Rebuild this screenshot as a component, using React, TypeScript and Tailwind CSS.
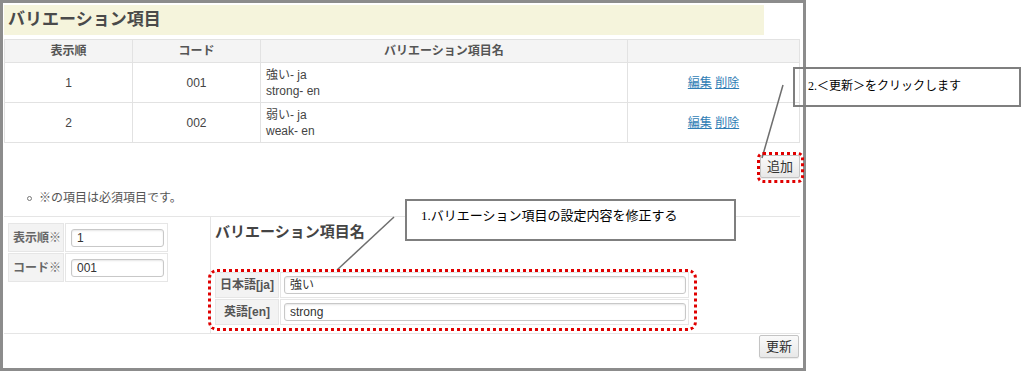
import React from "react";

const font = "font-['Liberation_Sans','Noto_Sans_CJK_JP',sans-serif]";
const serif = "font-['Liberation_Serif','Noto_Sans_CJK_JP',serif]";

function Btn({ children }: { children: React.ReactNode }) {
  return (
    <button className="h-[23px] px-[6px] text-[13px] leading-none text-[#333] border border-[#c4c4c4] rounded-[2px] bg-gradient-to-b from-[#fafafa] to-[#e8e8e8] shadow-[0_1px_1px_rgba(0,0,0,0.08)]">
      {children}
    </button>
  );
}

function Input({ value, w }: { value: string; w: string }) {
  return (
    <div
      className={`${w} h-[18px] border border-[#c8c8c8] rounded-[3px] bg-white shadow-[inset_0_1px_2px_rgba(0,0,0,0.1)] px-[5px] text-[12px] leading-[16px] text-[#333]`}
    >
      {value}
    </div>
  );
}

export default function App() {
  const rows = [
    { n: "1", code: "001", ja: "強い- ja", en: "strong- en" },
    { n: "2", code: "002", ja: "弱い- ja", en: "weak- en" },
  ];
  return (
    <div className={`relative w-[1024px] h-[372px] bg-white ${font}`}>
      {/* main frame */}
      <div className="w-[806px] h-[371px] border-[3px] border-[#8c8c8c] pl-[1px] pr-[3px] flex flex-col">
        <div className="mt-[2px] h-[30px] w-[760px] bg-[#f5f4dc] pl-[4px] text-[17px] leading-[30px] font-bold text-[#4a4a4a]">
          バリエーション項目
        </div>
        <table className="mt-[4px] w-full table-fixed border-collapse text-[12px] text-[#444]">
          <colgroup>
            <col className="w-[128px]" />
            <col className="w-[128px]" />
            <col className="w-[367px]" />
            <col />
          </colgroup>
          <thead>
            <tr className="h-[23px] bg-[#f4f4f4]">
              <th className="border border-[#e2e2e2] font-bold text-[#555]">表示順</th>
              <th className="border border-[#e2e2e2] font-bold text-[#555]">コード</th>
              <th className="border border-[#e2e2e2] font-bold text-[#555]">バリエーション項目名</th>
              <th className="border border-[#e2e2e2]"></th>
            </tr>
          </thead>
          <tbody>
            {rows.map((r) => (
              <tr key={r.n} className="h-[40px]">
                <td className="border border-[#e2e2e2] text-center">{r.n}</td>
                <td className="border border-[#e2e2e2] text-center">{r.code}</td>
                <td className="border border-[#e2e2e2] pl-[5px] leading-[16px]">
                  <div>{r.ja}</div>
                  <div>{r.en}</div>
                </td>
                <td className="border border-[#e2e2e2] text-center">
                  <span className="text-[#2f7db5] underline">編集</span>{" "}
                  <span className="text-[#2f7db5] underline">削除</span>
                </td>
              </tr>
            ))}
          </tbody>
        </table>
        <div className="flex justify-end mt-[12px]">
          <Btn>追加</Btn>
        </div>
        <div className="flex items-center mt-[13px] pl-[23px] h-[14px] text-[12px] text-[#555]">
          <span className="inline-block w-[5px] h-[5px] rounded-full border border-[#777] mr-[7px]"></span>
          ※の項目は必須項目です。
        </div>
        <div className="mt-[11px] h-[118px] flex border-t border-b border-[#e5e5e5]">
          <div className="w-[207px] pl-[4px] pt-[6px] border-r border-[#e5e5e5]">
            <div className="flex flex-col gap-[1px] w-[160px] text-[12px]">
              {[
                ["表示順※", "1"],
                ["コード※", "001"],
              ].map(([l, v]) => (
                <div key={l} className="flex h-[29px] gap-[1px]">
                  <div className="w-[56px] bg-[#f3f3f3] border border-[#e6e6e6] flex items-center pl-[4px] text-[#666] font-bold">
                    {l}
                  </div>
                  <div className="flex-1 border border-[#e6e6e6] flex items-center pl-[5px]">
                    <Input value={v} w="w-[93px]" />
                  </div>
                </div>
              ))}
            </div>
          </div>
          <div className="flex-1 pl-[4px] pt-[5px]">
            <div className="text-[15px] font-bold text-[#444] leading-[20px]">バリエーション項目名</div>
            <div className="mt-[30px] flex flex-col gap-[1px] w-[474px] text-[12px]">
              {[
                ["日本語[ja]", "強い"],
                ["英語[en]", "strong"],
              ].map(([l, v]) => (
                <div key={l} className="flex h-[26px] gap-[1px]">
                  <div className="w-[64px] bg-[#f3f3f3] border border-[#e6e6e6] flex items-center justify-center text-[#555] font-bold">
                    {l}
                  </div>
                  <div className="flex-1 border border-[#e6e6e6] flex items-center pl-[3px]">
                    <Input value={v} w="w-[402px]" />
                  </div>
                </div>
              ))}
            </div>
          </div>
        </div>
        <div className="flex justify-end mt-[1px] pr-[1px]">
          <Btn>更新</Btn>
        </div>
      </div>

      {/* annotations */}
      <svg className="absolute left-0 top-0 pointer-events-none" width="1024" height="372">
        <line x1="783" y1="85" x2="762" y2="158" stroke="#6e6e6e" strokeWidth="1.5" />
        <line x1="394" y1="217" x2="337" y2="270" stroke="#6e6e6e" strokeWidth="1.5" />
      </svg>
      <div className="absolute left-[757px] top-[152px] w-[47px] h-[31px] border-[3px] border-dotted border-[#e00000] rounded-[6px]"></div>
      <div className="absolute left-[208px] top-[269px] w-[489px] h-[62px] border-[3px] border-dotted border-[#e00000] rounded-[9px]"></div>
      <div className={`absolute left-[793px] top-[67px] w-[228px] h-[40px] border-2 border-[#7f7f7f] pl-[13px] pt-[8px] text-[12px] text-black ${serif}`}>
        2.＜更新＞をクリックします
      </div>
      <div className={`absolute left-[405px] top-[199px] w-[331px] h-[42px] border-2 border-[#7f7f7f] bg-white pl-[14px] pt-[5px] text-[13px] text-black ${serif}`}>
        1.バリエーション項目の設定内容を修正する
      </div>
    </div>
  );
}
